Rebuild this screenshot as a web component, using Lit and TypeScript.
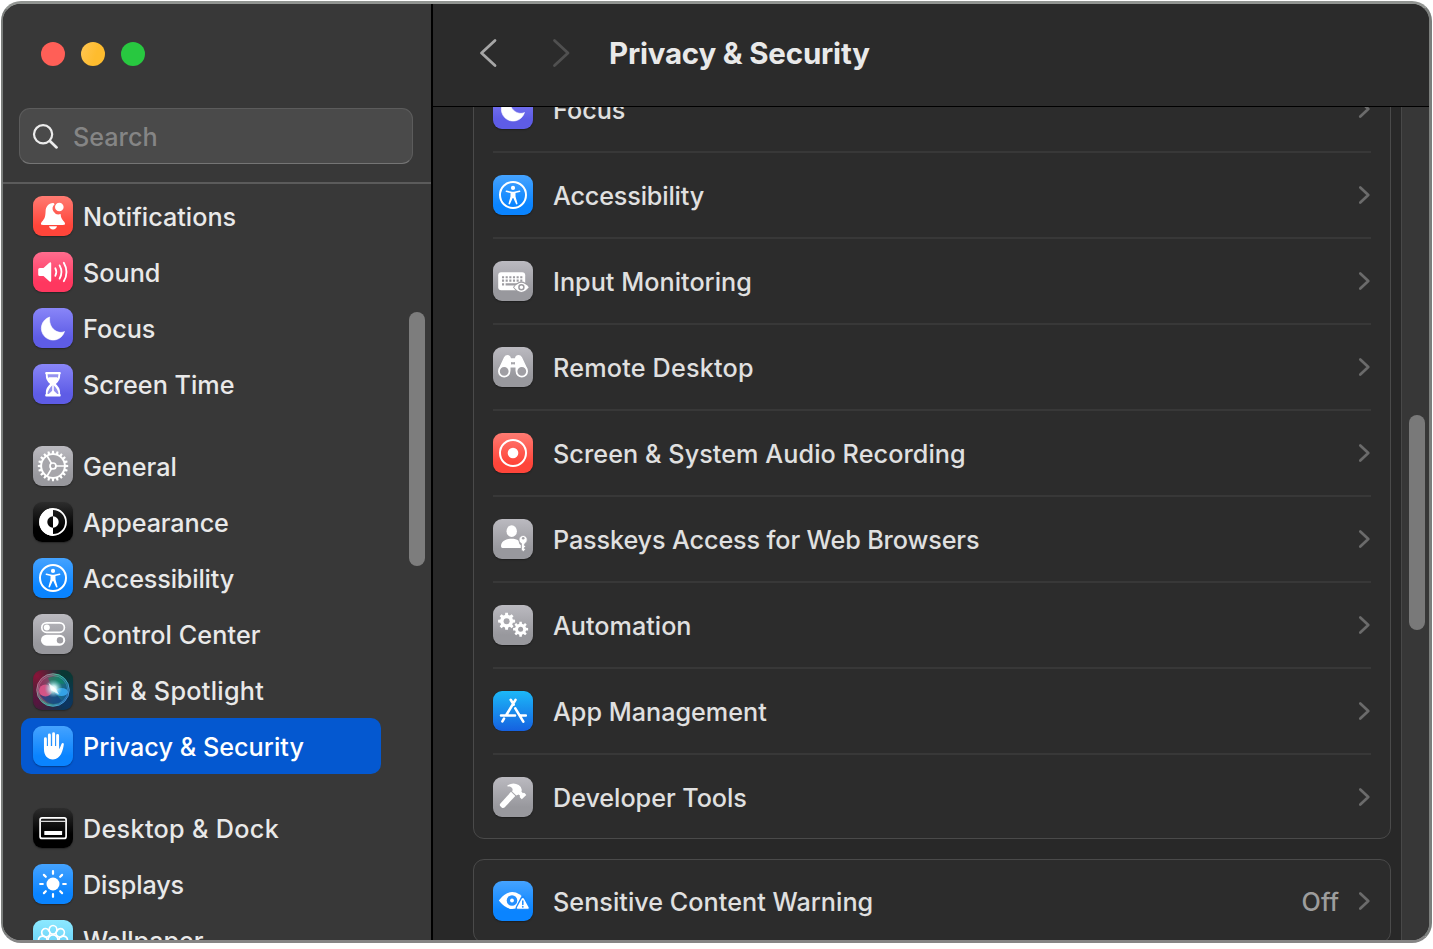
import { LitElement, html, svg, css } from "lit";
import { customElement, property } from "lit/decorators.js";
import { classMap } from "lit/directives/class-map.js";

const gearPath = (cx: number, cy: number, rOut: number, rIn: number, teeth: number, duty = 0.5) => {
  const step = (Math.PI * 2) / teeth;
  const pt = (r: number, a: number) => `${(cx + r * Math.cos(a)).toFixed(2)} ${(cy + r * Math.sin(a)).toFixed(2)}`;
  let d = "";
  for (let i = 0; i < teeth; i++) {
    const a = i * step - Math.PI / 2;
    const w = (step * duty) / 2;
    d += `${i ? "L" : "M"}${pt(rIn, a - w * 1.25)}L${pt(rOut, a - w * 0.8)}L${pt(rOut, a + w * 0.8)}L${pt(rIn, a + w * 1.25)}`;
  }
  return d + "Z";
};

const accessibility = svg`
  <circle cx="20" cy="20" r="13" fill="none" stroke="#fff" stroke-width="2"/>
  <circle cx="20" cy="12.9" r="2.1" fill="#fff"/>
  <path d="M13.6 15.6 18 16.5q2 .35 4 0l4.400-.9q.9-.1 1 .6 0 .6-.6.8L22.500 18v3.600l2 6.800q.1.800-.5 1-.7.200-1.100-.6L20.300 23h-.6l-2.600 5.800q-.4.800-1.100.6-.6-.2-.5-1l2-6.800V18l-4.300-1q-.6-.2-.6-.8.100-.7 1-.6Z" fill="#fff"/>`;

const moon = svg`<path d="M16.700 9A11.800 11.800 0 1 0 31.500 23.500C25 26.700 15.200 20.500 16.700 9Z" fill="#fff" stroke="#fff" stroke-width=".6" stroke-linejoin="round"/>`;

const GLYPHS: Record<string, unknown> = {
  bell: svg`
    <path d="M20 7.100c-4.600.5-7.200 3.600-7.400 8.200-.3 5.600-.9 7.300-2.800 9.400-1.600 1.700-2 2.500-1.800 3.300.2.700.8.900 1.800.9h20.400c1 0 1.600-.2 1.800-.9.200-.8-.2-1.600-1.800-3.300-1.500-1.700-2.300-3.100-2.600-6.600a5.900 5.900 0 0 1-6-9.900Q20.900 7 20 7.100Z" fill="#fff"/>
    <circle cx="26.300" cy="11" r="4.300" fill="#fff"/>
    <path d="M16 30.200h8c-.4 1.800-2 3.200-4 3.200s-3.600-1.400-4-3.200Z" fill="#fff"/>`,
  sound: svg`
    <path d="M5.200 17.500q0-1.500 1.500-1.500h3.800l5.800-5.200q1.900-1.300 1.900.7v17q0 2-1.900.7L10.500 24H6.700q-1.500 0-1.500-1.500Z" fill="#fff"/>
    <path d="M22.300 16.200q2 3.800 0 7.600M26.600 13.400q3.700 6.600 0 13.200M30.800 10.700q5.400 9.300 0 18.600" fill="none" stroke="#fff" stroke-width="1.800" stroke-linecap="round"/>`,
  moon,
  hourglass: svg`
    <path d="M13.100 8h13.800c1.200 0 1.200 2.300.2 2.500.3 4.500-1.200 6.500-4.300 9.500 3.100 3 4.600 5 4.300 10 .9.200.9 2.500-.2 2.500H13.100c-1.200 0-1.200-2.300-.2-2.500-.3-5 1.200-7 4.300-10-3.100-3-4.600-5-4.300-9.500-1-.2-1-2.500.2-2.500Z" fill="#fff"/>
    <path d="M14.600 10.200h10.800q0 2-.8 3.900H15.400q-.8-1.900-.8-3.900ZM20 20.700q5.200 4.400 5.500 9.300h-1.200L20 26l-4.300 4h-1.200q.3-4.900 5.500-9.300Z" fill="#716ee9" opacity=".75"/>
    <path d="M19.200 18h1.600v9h-1.600ZM15.400 13.200h9.200L20 18.900Z" fill="#fff"/>`,
  gear: svg`
    <path d="${gearPath(20, 20, 15.200, 12.800, 20)}" fill="#fff"/>
    <circle cx="20" cy="20" r="10.900" fill="#a7a6ab"/>
    <g fill="none" stroke="#fff" stroke-width="1.700"><path d="M23 20h9M18.500 17.400 14 9.700M18.500 22.600 14 30.300"/><circle cx="20" cy="20" r="3"/></g>`,
  appearance: svg`
    <circle cx="20" cy="20" r="13" fill="none" stroke="#fff" stroke-width="1.800"/>
    <path d="M20 6.300a13.700 13.700 0 0 0 0 27.400V25.700a5.700 5.700 0 0 1 0-11.400Z" fill="#fff"/>
    <path d="M20 14.300a5.700 5.700 0 0 1 0 11.400Z" fill="#fff"/>`,
  accessibility,
  toggles: svg`
    <rect x="8.800" y="8.800" width="22.600" height="9.600" rx="4.800" fill="none" stroke="#fff" stroke-width="1.700"/>
    <circle cx="13.800" cy="13.600" r="3" fill="#fff"/>
    <rect x="8" y="20.700" width="24.200" height="11" rx="5.500" fill="#fff"/>
    <circle cx="27" cy="26.200" r="3.200" fill="#a09fa4"/>`,
  siri: svg`
    <defs>
      <radialGradient id="core"><stop offset="0" stop-color="#fff"/><stop offset=".3" stop-color="#dff" stop-opacity=".9"/><stop offset="1" stop-color="#7cd" stop-opacity="0"/></radialGradient>
      <linearGradient id="orb" x1="0" y1=".3" x2="1" y2=".6"><stop offset="0" stop-color="#b32a68"/><stop offset=".35" stop-color="#8d6480"/><stop offset=".6" stop-color="#2b9a92"/><stop offset="1" stop-color="#1668b8"/></linearGradient>
      <linearGradient id="ring" x1="0" y1="0" x2="1" y2=".6"><stop offset="0" stop-color="#e0558a"/><stop offset=".5" stop-color="#41c6a0"/><stop offset="1" stop-color="#4a97dc"/></linearGradient>
    </defs>
    <circle cx="20" cy="20" r="16.500" fill="url(#orb)" opacity=".65"/>
    <path d="M15 8Q26 4 32 14q-8-2-12 5Z" fill="#0b8a66" opacity=".6"/>
    <path d="M7 25q9 2 14-3l8 9q-12 8-22-6Z" fill="#143c86" opacity=".65"/>
    <ellipse cx="12.500" cy="20.500" rx="6.500" ry="6" fill="#e8598f" opacity=".8"/>
    <ellipse cx="28.500" cy="22" rx="6.500" ry="4" fill="#37a9f0" opacity=".9"/>
    <circle cx="20.500" cy="18.500" r="9" fill="url(#core)"/>
    <path d="M15.500 13l7.500 6 3 5.500-8-4.500Z" fill="#fff" opacity=".8"/>
    <circle cx="20" cy="20" r="16.200" fill="none" stroke="url(#ring)" stroke-width="1"/>
    <circle cx="20" cy="20.300" r="14.800" fill="none" stroke="url(#ring)" stroke-width=".6"/>`,
  hand: svg`
    <g fill="none" stroke="#fff" stroke-linecap="round" stroke-width="2.900"><path d="M12.400 12.800V23M16.400 9v12M20.600 7.700V21M24.600 9.500V23"/></g>
    <path d="M11 20h15.100v3.200c1-1.600 1.900-4.200 2.500-5.500.7-1.300 2.500-.8 2.200.8-.8 5.200-2.700 14.900-10.900 14.900-5.400 0-8.900-3.800-8.900-9.900Z" fill="#fff"/>`,
  dock: svg`
    <rect x="7.100" y="9.800" width="26" height="20.600" rx="2" fill="none" stroke="#fff" stroke-width="1.700"/>
    <path d="M7 13.300h26" stroke="#ddd" stroke-width="1.200"/>
    <rect x="11.300" y="23" width="17.800" height="4" rx=".5" fill="#fff"/>`,
  sun: svg`
    <circle cx="20" cy="20" r="6.500" fill="#fff"/>
    <path d="M20 7.200v2.600M20 30.200v2.600M7.200 20h2.600M30.200 20h2.600M10.900 10.900l1.900 1.900M27.200 27.200l1.900 1.900M10.900 29.100l1.900-1.900M27.200 12.800l1.900-1.900" stroke="#fff" stroke-width="2.200" stroke-linecap="round"/>`,
  flower: svg`<g fill="none" stroke="#fff" stroke-width="1.700">
    ${[0, 45, 90, 135, 180, 225, 270, 315].map(a => svg`<ellipse cx="20" cy="9.800" rx="3.900" ry="4.300" transform="rotate(${a} 20 20)"/>`)}
    <circle cx="20" cy="20" r="5"/></g>`,
  keyboard: svg`
    <rect x="5.200" y="11.300" width="27" height="18" rx="3" fill="#fff"/>
    <path d="M9 16.200h21M9 19.600h21" stroke="#9d9ca1" stroke-width="2.100" stroke-dasharray="2.100 1.550"/>
    <path d="M9 23.400h2.100M12.600 23.400h12" stroke="#9d9ca1" stroke-width="2.100"/>
    <path d="M20 26.300q4-5.700 8.400-5.700t8.400 5.700q-4 5.700-8.400 5.700T20 26.300Z" fill="#9d9ca1"/>
    <path d="M21 26.300q3.800-4.600 7.400-4.600t7.400 4.600q-3.800 4.600-7.400 4.600T21 26.300Z" fill="#fff"/>
    <circle cx="28.400" cy="26.300" r="2.500" fill="#fff" stroke="#9d9ca1" stroke-width="1.500"/>`,
  binoculars: svg`
    <path d="M11 10.300q1.300-2.300 3.400-2.300 3 0 3.700 3.300h3.800q.7-3.300 3.700-3.300 2.100 0 3.400 2.300l5.500 11.700L30 28l-7.500-4.500v-3h-5v3L10 28l-4.500-6Z" fill="#fff"/>
    <path d="M18 14.900q2 .8 4 0v2.700q-2-.8-4 0Z" fill="#a7a6ab"/>
    <circle cx="11.200" cy="24.300" r="5.300" fill="#a09fa4" stroke="#fff" stroke-width="1.800"/>
    <circle cx="28.800" cy="24.300" r="5.300" fill="#a09fa4" stroke="#fff" stroke-width="1.800"/>`,
  record: svg`
    <circle cx="20" cy="20" r="13" fill="none" stroke="#fff" stroke-width="2"/>
    <circle cx="20" cy="20" r="5.300" fill="#fff"/>`,
  passkey: svg`
    <ellipse cx="18.700" cy="12.200" rx="5.200" ry="5.900" fill="#fff"/>
    <path d="M8 27.300c0-4.800 4.700-7.500 10.500-7.500 3 0 5.300.6 7.200 1.900 0 2.300.8 3.600 2.100 4.300v3H9.500Q8 29 8 27.300Z" fill="#fff"/>
    <path d="M30.200 16.400a4.300 4.300 0 0 0-1.700 8.200V31l1.800 1.600 2-2.100-1.300-1.400 1.500-1.500-1.400-1.500.8-1.600a4.300 4.300 0 0 0-1.700-8.100Z" fill="#fff" stroke="#a3a2a7" stroke-width=".7"/>
    <circle cx="30.200" cy="19.300" r="1.300" fill="#a3a2a7"/>`,
  gears: svg`
    <path d="${gearPath(13.600, 16.200, 8.600, 6.500, 8)}" fill="#fff"/><circle cx="13.600" cy="16.200" r="3" fill="#a8a7ac"/>
    <path d="${gearPath(27.600, 24.200, 7.600, 5.600, 8)}" fill="#fff"/><circle cx="27.600" cy="24.200" r="2.500" fill="#a09fa4"/>`,
  appstore: svg`
    <g fill="none" stroke="#fff" stroke-width="2.600" stroke-linecap="round">
    <path d="M17.700 8.800l3 4.800M22.500 8.800 13 24.500M8 24.500h14M27.500 24.500h5.300M22.300 17.300l8 13.300M11 27.700l-1.600 2.700"/></g>`,
  hammer: svg`
    <path d="M18 14.800 22.300 19 11.500 30.600q-1.500 1-2.900-.2l-1.500-1.500q-.8-1.200.3-2.500Z" fill="#fff"/>
    <path d="M14.500 8.400q5.800-3.700 11.200-.3 4.100 2.700 2.700 6.500l1.500 1.700q1-.9 1.900-.1l1.500 1.700-4.500 4.400-1.800-1.700q-.5-1 .1-1.900l-1.500-1.300q-1.100.3-2.300 1.200l-4.200-4.200q1.300-2.500-.6-4-1.500-1.100-4-1.100Q13.700 9.200 14.500 8.400Z" fill="#fff"/>`,
  eye: svg`
    <path d="M5.800 19.500Q12 11 19.300 11t13.500 8.500Q26 28 19.300 28T5.800 19.500Z" fill="#fff"/>
    <circle cx="19" cy="19.500" r="5.300" fill="#2490ff"/><circle cx="19" cy="19.500" r="1.900" fill="#fff"/>
    <path d="M29.700 14.800q1-.2 1.600.8l5.500 10.300q.8 2.900-1.800 3H24.500q-2.500-.2-1.800-3l5.500-10.300q.5-.8 1.500-.8Z" fill="#1c8bff"/>
    <path d="M29.800 17q.7 0 1 .6l4.900 8.800q.4 1.200-.8 1.300H24.700q-1.200-.1-.8-1.300l4.900-8.800q.3-.6 1-.6Z" fill="#fff"/>
    <path d="M29.800 20v3.600" stroke="#1c8bff" stroke-width="1.500" stroke-linecap="round"/><circle cx="29.800" cy="25.800" r=".9" fill="#1c8bff"/>`,
};

interface Entry { label: string; icon: string; tone: string; track?: number; value?: string; active?: boolean; }

const SIDEBAR: Entry[][] = [
  [
    { label: "Notifications", icon: "bell", tone: "red" },
    { label: "Sound", icon: "sound", tone: "pink" },
    { label: "Focus", icon: "moon", tone: "indigo" },
    { label: "Screen Time", icon: "hourglass", tone: "indigo" },
  ],
  [
    { label: "General", icon: "gear", tone: "gray" },
    { label: "Appearance", icon: "appearance", tone: "black", track: -0.1 },
    { label: "Accessibility", icon: "accessibility", tone: "blue", track: -0.17 },
    { label: "Control Center", icon: "toggles", tone: "gray", track: 0.1 },
    { label: "Siri & Spotlight", icon: "siri", tone: "siri", track: 0.28 },
    { label: "Privacy & Security", icon: "hand", tone: "blue", active: true, track: 0.03 },
  ],
  [
    { label: "Desktop & Dock", icon: "dock", tone: "black", track: 0.32 },
    { label: "Displays", icon: "sun", tone: "blue", track: -0.12 },
    { label: "Wallpaper", icon: "flower", tone: "cyan", track: -0.08 },
  ],
];

const CARDS: Entry[][] = [
  [
    { label: "Focus", icon: "moon", tone: "indigo" },
    { label: "Accessibility", icon: "accessibility", tone: "blue", track: -0.17 },
    { label: "Input Monitoring", icon: "keyboard", tone: "gray", track: 0.03 },
    { label: "Remote Desktop", icon: "binoculars", tone: "gray", track: 0.2 },
    { label: "Screen & System Audio Recording", icon: "record", tone: "red", track: 0.07 },
    { label: "Passkeys Access for Web Browsers", icon: "passkey", tone: "gray", track: -0.12 },
    { label: "Automation", icon: "gears", tone: "gray" },
    { label: "App Management", icon: "appstore", tone: "store" },
    { label: "Developer Tools", icon: "hammer", tone: "gray", track: -0.04 },
  ],
  [{ label: "Sensitive Content Warning", icon: "eye", tone: "blue", value: "Off", track: 0.03 }],
];

@customElement("setting-icon")
class SettingIcon extends LitElement {
  @property() icon = "";
  @property() tone = "";
  static styles = css`
    :host { display: block; flex: none; width: 40px; height: 40px; }
    .tile { width: 40px; height: 40px; border-radius: 9px; box-shadow: 0 1px 1.5px rgba(0, 0, 0, 0.35); }
    .tile svg { display: block; width: 40px; height: 40px; border-radius: 9px; }
    .red { background: linear-gradient(#ff7b72, #ff453a 75%); }
    .pink { background: linear-gradient(#ff6d8e, #ff375f 75%); }
    .indigo { background: linear-gradient(#8986f8, #5e5ce6 75%); }
    .gray { background: linear-gradient(#bbbac0, #98989d 75%); }
    .black { background: linear-gradient(#2d2d2d, #000 65%); }
    .blue { background: linear-gradient(#45a3ff, #0a84ff 75%); }
    .cyan { background: linear-gradient(#8de9ff, #5ac8f5 90%); }
    .store { background: linear-gradient(#1cb8f8, #1561e0); box-shadow: 0 0 0 0.5px #222; }
    .siri { background: radial-gradient(circle at 10% 15%, #8c1238, transparent 50%), radial-gradient(circle at 10% 80%, #5a143f, transparent 55%), radial-gradient(circle at 85% 85%, #0d3563, transparent 60%), #0a3834; }
  `;
  render() {
    return html`<div class="tile ${this.tone}"><svg viewBox="0 0 40 40">${GLYPHS[this.icon]}</svg></div>`;
  }
}

@customElement("app-root")
class AppRoot extends LitElement {
  static styles = css`
    :host { display: block; width: 1433px; height: 949px; overflow: hidden; background: #fff; padding: 1px 1px 6px 1px; box-sizing: border-box;
      font-family: Inter, "Liberation Sans", sans-serif; font-size: 25.2px; font-weight: 450; color: #e9e9e9; }
    * { box-sizing: border-box; }
    .window { display: flex; height: 942px; border: 2px solid #7b7e7c; border-width: 3px 3px 3px 2px; border-top-color: #929592; border-bottom-color: #858585; border-radius: 20px; overflow: hidden; background: #282828; }
    .sidebar { position: relative; width: 428px; flex: none; background: #383838; display: flex; flex-direction: column; }
    .lights { display: flex; gap: 16px; padding: 38px 0 0 38px; }
    .light { width: 24px; height: 24px; border-radius: 50%; }
    .close { background: #ff5f57; }
    .minimise { background: linear-gradient(110deg, #ffc654, #febc2e 60%); }
    .zoom { background: #28c840; }
    .search { display: flex; align-items: center; gap: 14px; height: 56px; margin: 42px 18px 0 16px; padding-left: 11px; border: 1px solid #5c5c5c; border-bottom-color: #757575; border-radius: 11px; background: #4a4a4a; color: #858585; }
    .search svg { width: 28px; height: 28px; flex: none; }
    .nav { margin-top: 18px; border-top: 2px solid #5b5b5b; padding: 4px 0 0 18px; flex: 1; min-height: 0; overflow: hidden; display: flex; flex-direction: column; gap: 26px; }
    .group { flex: none; }
    .item { display: flex; align-items: center; gap: 10px; width: 360px; height: 56px; padding: 0 12px; border-radius: 10px; white-space: nowrap; }
    .item.active { background: #0458d0; color: #fff; }
    .text { padding-top: 2px; white-space: nowrap; }
    .thumb { position: absolute; background: #7d7d7d; border-radius: 8px; width: 16px; }
    .thumb.side { left: 406px; top: 308px; height: 254px; }
    .thumb.main { left: 7px; top: 308px; height: 215px; background: #797979; }
    .content { flex: 1; min-width: 0; border-left: 2px solid #000; display: flex; flex-direction: column; }
    .header { flex: none; height: 103px; border-bottom: 1px solid #000; background: #2b2b2b; display: flex; align-items: center; padding: 0 0 5px 45px; }
    .header svg { width: 20px; height: 32px; }
    .forward { margin-left: 53px; }
    .title { margin: 0 0 0 38px; font-size: 29.5px; font-weight: 700; letter-spacing: -0.2px; }
    .scroll { flex: 1; min-height: 0; display: flex; overflow: hidden; }
    .list { flex: 1; min-width: 0; display: flex; flex-direction: column; justify-content: flex-end; gap: 20px; padding: 0 10px 0 40px; margin-bottom: -3px; }
    .card { flex: none; border: 1px solid #4a4a4a; border-radius: 11px; background: #2c2c2c; padding: 0 19px; }
    .row { display: flex; align-items: center; gap: 20px; height: 86px; border-top: 2px solid #383838; color: #e0e0e0; }
    .row:last-child { height: 85px; padding-top: 1px; }
    .row:first-child { border-top: 0; height: 84px; padding-top: 0; }
    .row:only-child { height: 82px; }
    .value { margin-left: auto; color: #9d9d9d; }
    .chevron { width: 14px; height: 20px; margin-left: auto; flex: none; }
    .value + .chevron { margin-left: -2px; }
    .track { position: relative; width: 28px; flex: none; background: #373737; border-left: 1px solid #484848; }
  `;

  private text(e: Entry) {
    return html`<span class="text" style="letter-spacing:${e.track ?? 0}px">${e.label}</span>`;
  }

  render() {
    return html`
      <div class="window">
        <div class="sidebar">
          <div class="lights"><div class="light close"></div><div class="light minimise"></div><div class="light zoom"></div></div>
          <div class="search">
            <svg viewBox="0 0 28 28" fill="none" stroke="#ececec" stroke-linecap="round"><circle cx="12.100" cy="12.300" r="9.100" stroke-width="2.200"/><path d="M18.900 19l6.700 6.400" stroke-width="2.700"/></svg>
            <span class="text">Search</span>
          </div>
          <div class="nav">
            ${SIDEBAR.map(g => html`<div class="group">${g.map(e => html`
              <div class="${classMap({ item: true, active: !!e.active })}"><setting-icon icon=${e.icon} tone=${e.tone}></setting-icon>${this.text(e)}</div>`)}</div>`)}
          </div>
          <div class="thumb side"></div>
        </div>
        <div class="content">
          <div class="header">
            <svg viewBox="0 0 20 32" fill="none" stroke="#a6a6a6" stroke-width="2.800" stroke-linecap="round" stroke-linejoin="round"><path d="M17 3.500 3.500 16 17 28.500"/></svg>
            <svg class="forward" viewBox="0 0 20 32" fill="none" stroke="#505050" stroke-width="2.800" stroke-linecap="round" stroke-linejoin="round"><path d="M3.500 3.500 17 16 3.500 28.500"/></svg>
            <h1 class="title">Privacy &amp; Security</h1>
          </div>
          <div class="scroll">
            <div class="list">
              ${CARDS.map(c => html`<div class="card">${c.map(e => html`
                <div class="row"><setting-icon icon=${e.icon} tone=${e.tone}></setting-icon>${this.text(e)}
                  ${e.value ? html`<span class="text value">${e.value}</span>` : ""}
                  <svg class="chevron" viewBox="0 0 14 20" fill="none" stroke="#6b6b6b" stroke-width="2.700" stroke-linecap="round" stroke-linejoin="round"><path d="M3.300 2.500 11.300 10 3.300 17.500"/></svg>
                </div>`)}</div>`)}
            </div>
            <div class="track"><div class="thumb main"></div></div>
          </div>
        </div>
      </div>`;
  }
}
